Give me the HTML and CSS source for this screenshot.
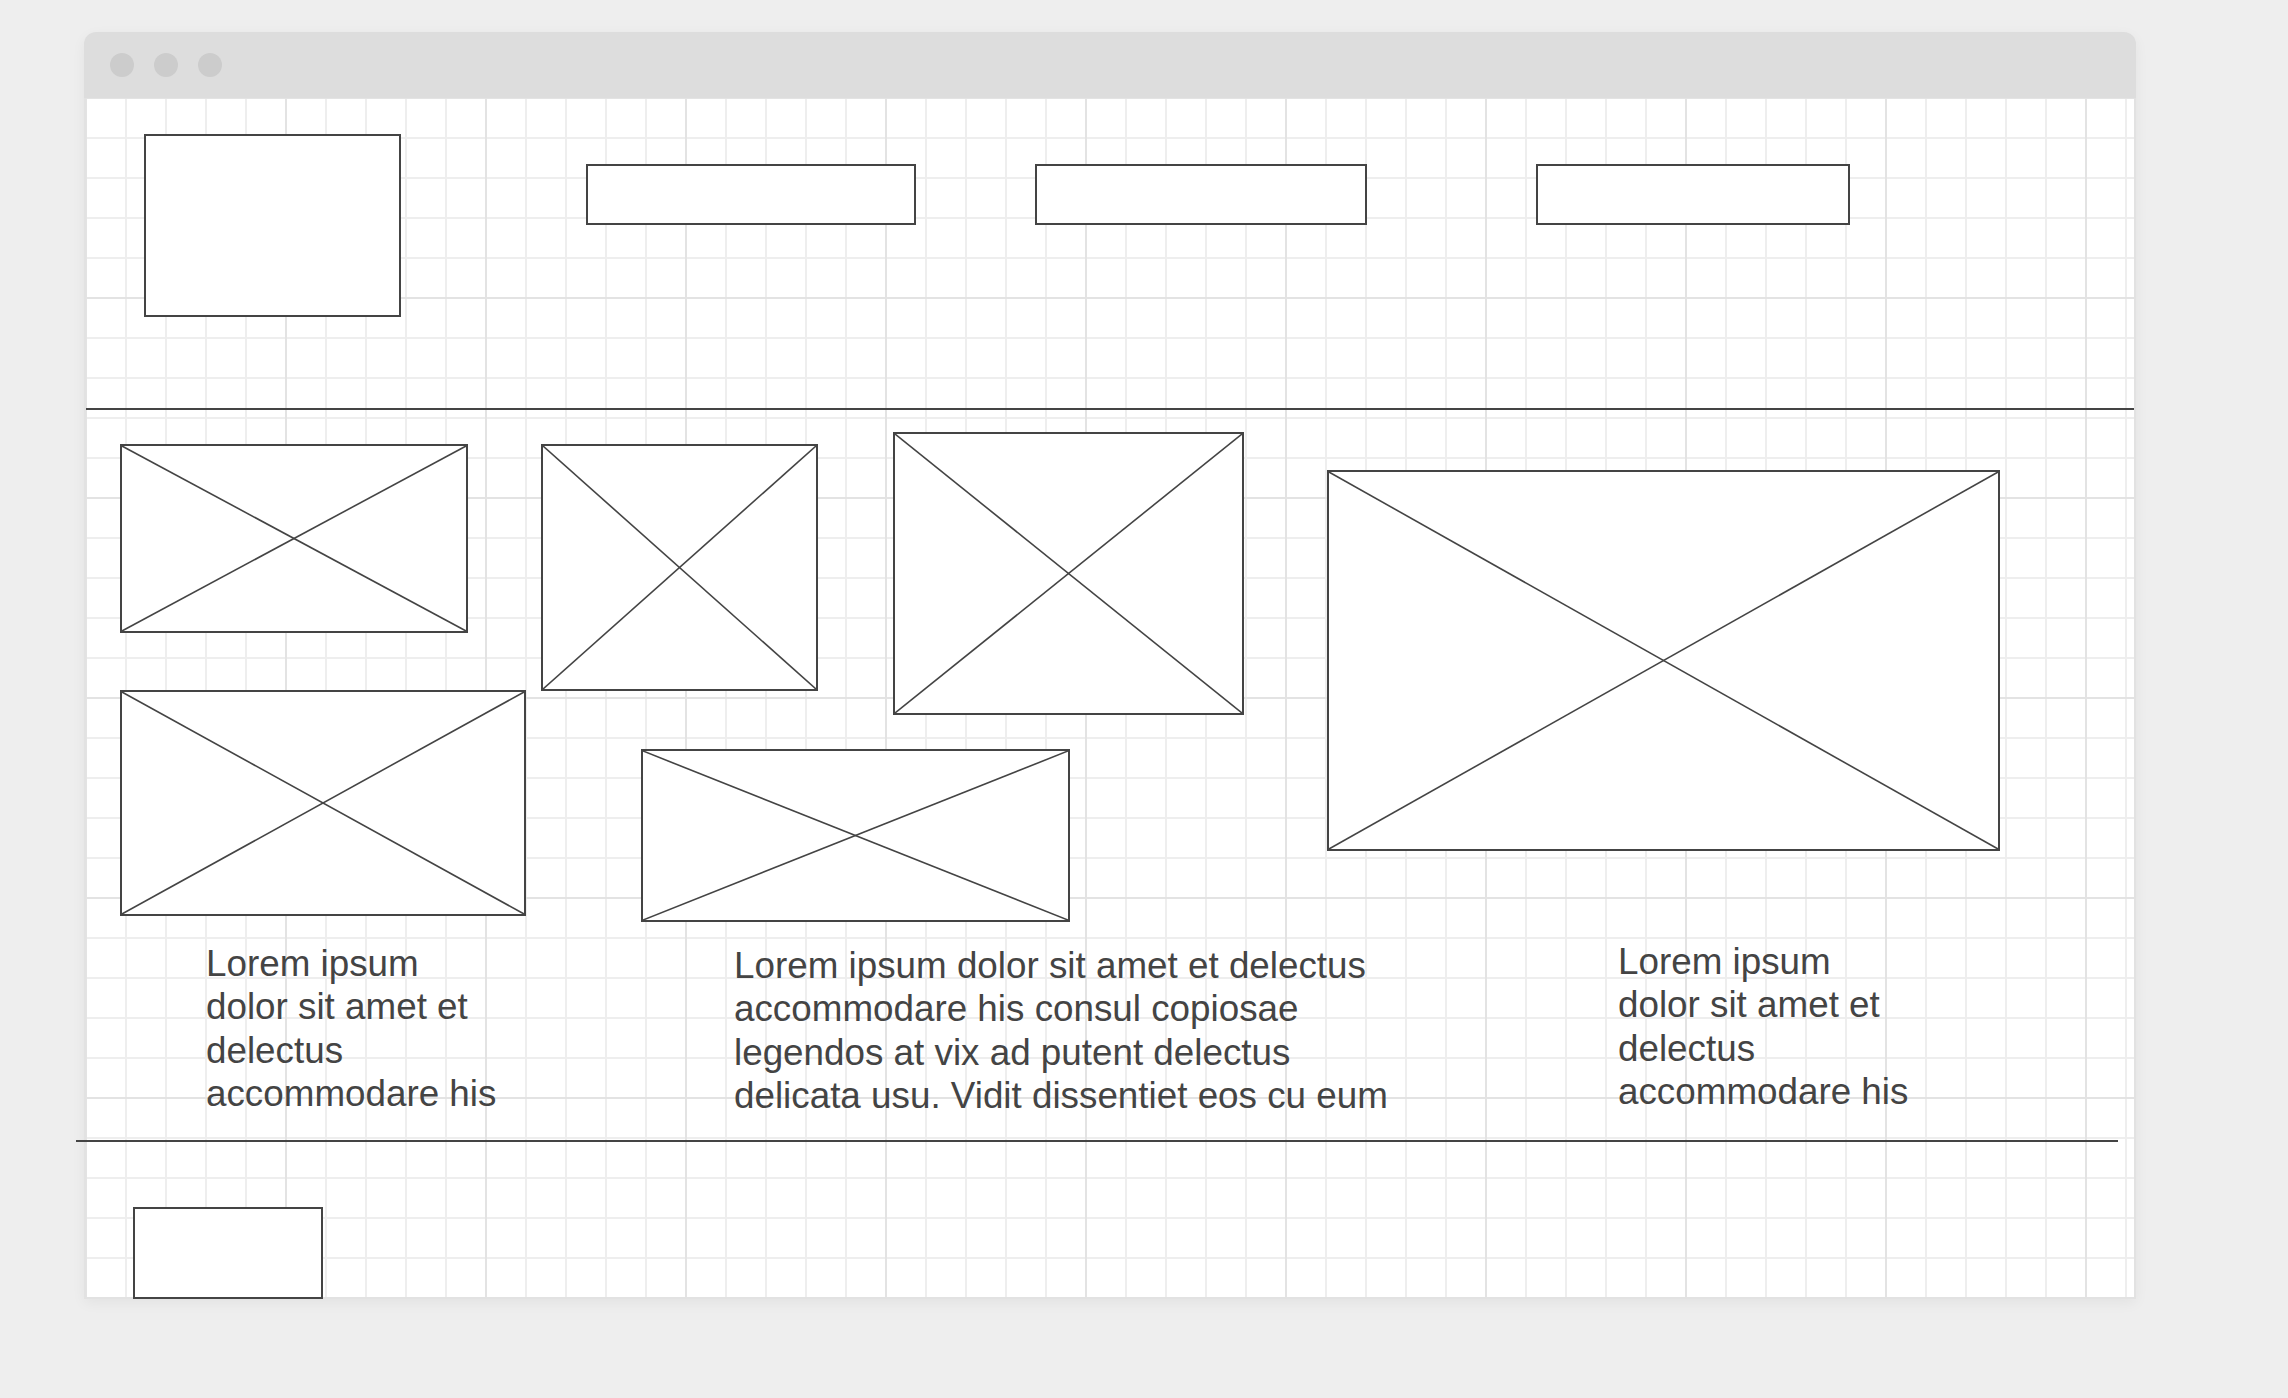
FILE: index.html
```html
<!DOCTYPE html>
<html lang="en">
<head>
<meta charset="utf-8">
<title>Wireframe</title>
<link rel="stylesheet" href="styles.css">
</head>
<body>
<div class="window">
  <div class="titlebar">
    <span class="dot"></span><span class="dot"></span><span class="dot"></span>
  </div>
  <div class="content">
    <header class="header">
      <div class="box logo"></div>
      <div class="box nav nav-1"></div>
      <div class="box nav nav-2"></div>
      <div class="box nav nav-3"></div>
    </header>
    <div class="divider"></div>
    <section class="gallery">
      <div class="col col-1">
        <div class="ph ph-a"><svg viewBox="0 0 100 100" preserveAspectRatio="none"><line x1="0" y1="0" x2="100" y2="100"/><line x1="100" y1="0" x2="0" y2="100"/></svg></div>
        <div class="ph ph-e"><svg viewBox="0 0 100 100" preserveAspectRatio="none"><line x1="0" y1="0" x2="100" y2="100"/><line x1="100" y1="0" x2="0" y2="100"/></svg></div>
      </div>
      <div class="col col-2">
        <div class="row">
          <div class="ph ph-b"><svg viewBox="0 0 100 100" preserveAspectRatio="none"><line x1="0" y1="0" x2="100" y2="100"/><line x1="100" y1="0" x2="0" y2="100"/></svg></div>
          <div class="ph ph-c"><svg viewBox="0 0 100 100" preserveAspectRatio="none"><line x1="0" y1="0" x2="100" y2="100"/><line x1="100" y1="0" x2="0" y2="100"/></svg></div>
        </div>
        <div class="ph ph-f"><svg viewBox="0 0 100 100" preserveAspectRatio="none"><line x1="0" y1="0" x2="100" y2="100"/><line x1="100" y1="0" x2="0" y2="100"/></svg></div>
      </div>
      <div class="col col-3">
        <div class="ph ph-d"><svg viewBox="0 0 100 100" preserveAspectRatio="none"><line x1="0" y1="0" x2="100" y2="100"/><line x1="100" y1="0" x2="0" y2="100"/></svg></div>
      </div>
    </section>
    <section class="texts">
      <p class="text text-1">Lorem ipsum<br>dolor sit amet et<br>delectus<br>accommodare his</p>
      <p class="text text-2">Lorem ipsum dolor sit amet et delectus<br>accommodare his consul copiosae<br>legendos at vix ad putent delectus<br>delicata usu. Vidit dissentiet eos cu eum</p>
      <p class="text text-3">Lorem ipsum<br>dolor sit amet et<br>delectus<br>accommodare his</p>
    </section>
    <div class="divider divider-bottom"></div>
    <footer class="footer">
      <div class="box foot-box"></div>
    </footer>
  </div>
</div>
</body>
</html>
```

FILE: styles.css
```css
* { box-sizing: border-box; }

html, body {
  margin: 0;
  padding: 0;
  background: #eeeeee;
}

body {
  font-family: "Liberation Sans", Arial, sans-serif;
  width: 2288px;
  height: 1398px;
  overflow: hidden;
}

.window {
  margin: 32px 0 0 84px;
  width: 2052px;
  display: flex;
  flex-direction: column;
  border-radius: 12px 12px 0 0;
  box-shadow: 0 4px 14px rgba(0, 0, 0, 0.05);
}

.titlebar {
  height: 66px;
  background: #dddddd;
  border-radius: 12px 12px 0 0;
  display: flex;
  align-items: center;
  gap: 20px;
  padding-left: 26px;
}

.dot {
  width: 24px;
  height: 24px;
  border-radius: 50%;
  background: #cccccc;
}

.content {
  border: 2px solid #e2e2e2;
  border-top: none;
  background-color: #ffffff;
  background-image:
    linear-gradient(to right, #e3e3e3 2px, transparent 2px),
    linear-gradient(to bottom, #e3e3e3 2px, transparent 2px),
    linear-gradient(to right, #eeeeee 2px, transparent 2px),
    linear-gradient(to bottom, #eeeeee 2px, transparent 2px);
  background-size: 200px 200px, 200px 200px, 40px 40px, 40px 40px;
  background-position: -1px -1px, -1px -1px, -1px -1px, -1px -1px;
  display: flex;
  flex-direction: column;
}

.box {
  border: 2px solid #444444;
  background: #ffffff;
  flex: none;
}

/* header */
.header {
  display: flex;
  align-items: flex-start;
  padding: 36px 0 0 58px;
}

.logo {
  width: 257px;
  height: 183px;
}

.nav {
  height: 61px;
  margin-top: 30px;
}

.nav-1 { width: 330px; margin-left: 185px; }
.nav-2 { width: 332px; margin-left: 119px; }
.nav-3 { width: 314px; margin-left: 169px; }

.divider {
  height: 2px;
  background: #444444;
  margin-top: 91px;
}

/* gallery */
.gallery {
  display: flex;
  align-items: flex-start;
  padding-left: 34px;
  margin-top: 22px;
}

.col {
  display: flex;
  flex-direction: column;
  align-items: flex-start;
  flex: none;
}

.row {
  display: flex;
  align-items: flex-start;
}

.ph {
  border: 2px solid #444444;
  background: #ffffff;
  flex: none;
}

.ph svg {
  display: block;
  width: 100%;
  height: 100%;
}

.ph line {
  stroke: #444444;
  stroke-width: 1.6;
  vector-effect: non-scaling-stroke;
}

.ph-a { width: 348px; height: 189px; margin-top: 12px; }
.ph-e { width: 406px; height: 226px; margin-top: 57px; }

.col-2 { margin-left: 15px; }
.ph-b { width: 277px; height: 247px; margin-top: 12px; }
.ph-c { width: 351px; height: 283px; margin-left: 75px; }
.ph-f { width: 429px; height: 173px; margin-top: 34px; margin-left: 100px; }

.col-3 { margin-left: 83px; }
.ph-d { width: 673px; height: 381px; margin-top: 38px; }

/* texts */
.texts {
  display: flex;
  align-items: flex-start;
  margin-top: 18px;
  padding-left: 120px;
}

.text {
  margin: 0;
  font-size: 36.8px;
  line-height: 43.3px;
  color: #444444;
  white-space: nowrap;
  flex: none;
}

.text-1 { width: 528px; margin-top: 2px; }
.text-2 { width: 884px; margin-top: 4px; }
.text-3 { margin-top: 0; }

.divider-bottom {
  margin-top: 23px;
  margin-left: -10px;
  width: 2042px;
}

/* footer */
.footer {
  display: flex;
  padding-left: 47px;
  margin-top: 65px;
  margin-bottom: -2px;
}

.foot-box {
  width: 190px;
  height: 92px;
}
```
